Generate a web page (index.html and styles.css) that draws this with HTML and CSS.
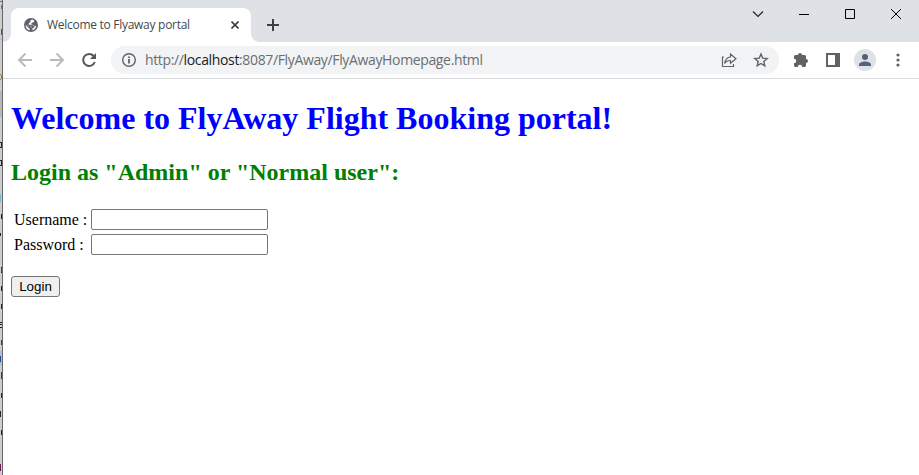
FILE: index.html
```html
<!DOCTYPE html>
<html lang="en">
<head>
<meta charset="utf-8">
<title>Welcome to Flyaway portal</title>
<link rel="stylesheet" href="styles.css">
</head>
<body>
<div class="desktop">
  <svg class="behind" width="3" height="475" viewBox="0 0 3 475" shape-rendering="crispEdges">
    <path fill="#cdcdcd" d="M0 0h2v475H0z"/>
    <path fill="#b9b9b9" d="M0 39h2v1H0zM0 91h2v26H0z"/>
    <path fill="#a8bfdd" d="M0 351h2v14H0z"/>
    <path fill="#777" d="M0 1h2v1H0zM1 5h1v4H1z"/>
    <path fill="#6b5a40" d="M1 29h1v6H1z"/>
    <path fill="#b57a22" d="M0 74h1v1H0zM1 75h1v4H1zM0 79h1v1H0z"/>
    <path fill="#222" d="M0 142h2v1H0zM1 143h1v4H1zM0 147h2v1H0zM0 160h2v1H0zM1 161h1v4H1zM0 165h2v1H0zM1 214h1v5H1zM0 233h1v3H0zM1 267h1v6H1zM1 286h1v5H1zM1 304h1v5H1zM0 322h2v1H0zM0 324h2v1H0zM0 327h2v1H0zM1 393h1v5H1zM0 411h1v6H0zM1 430h1v5H1z"/>
    <path fill="#7fb7d2" d="M0 194h1v8H0z"/>
    <path fill="#701850" d="M1 340h1v5H1zM1 372h1v7H1zM0 464h1v7H0z"/>
    <path fill="#264b9a" d="M0 356h1v6H0zM1 268h1v4H1z"/>
    <path fill="#686868" d="M2 0h1v475H2z"/>
  </svg>
  <div class="window">
    <header class="tabstrip">
      <div class="tab">
        <svg class="globe" width="14" height="14" viewBox="0 0 14 14"><circle cx="7" cy="7" r="7" fill="#5f6368"/><path fill="#fff" d="M8 1.500 6.400 2.600v1.500L4.800 5.200v1.500h3.600l1.200 1.200h2.600C11.800 10 10.500 11.600 8.500 12.200V11L7 9.700V8.400L5.500 8 1.700 5.900C1.200 8.900 2.900 11.700 5.700 12.300V10.700L4.200 9.500 1.600 7V5.800l3 2.100h2.700v2.200l1.600.5 1.700-1.900-1-1.500L7.500 6V5l2.400-1 .3-1.500z"/></svg>
        <span class="title">Welcome to Flyaway portal</span>
        <svg class="close" width="8" height="8" viewBox="0 0 8 8"><path d="m.5.5 7 7m0-7-7 7" stroke="#3c4043" stroke-width="1.600"/></svg>
      </div>
      <svg class="plus" width="12" height="12" viewBox="0 0 12 12"><path d="M6 0v12M0 6h12" stroke="#3c4043" stroke-width="2"/></svg>
      <div class="controls">
        <svg width="12" height="12" viewBox="0 0 12 12"><path d="m1 3.500 5 5 5-5" fill="none" stroke="#222" stroke-width="1.200"/></svg>
        <svg width="12" height="12" viewBox="0 0 12 12"><path d="M1 6.500h10" stroke="#000"/></svg>
        <svg width="12" height="12" viewBox="0 0 12 12"><path d="M1.500 1.500h9v9h-9z" fill="none" stroke="#000"/></svg>
        <svg width="12" height="12" viewBox="0 0 12 12"><path d="m1 1 10 10m0-10L1 11" stroke="#000"/></svg>
      </div>
    </header>
    <nav class="toolbar">
      <svg class="nav" width="16" height="16" viewBox="0 0 16 16"><path d="M15 8H2m6.500-6.500L2 8l6.500 6.500" fill="none" stroke="#bababc" stroke-width="1.900"/></svg>
      <svg class="nav" width="16" height="16" viewBox="0 0 16 16"><path d="M1 8h13M7.500 1.500 14 8l-6.500 6.500" fill="none" stroke="#bababc" stroke-width="1.900"/></svg>
      <svg class="nav" width="16" height="16" viewBox="0 0 16 16"><path d="M12.700 4A6 6 0 1 0 13.800 10" fill="none" stroke="#54585d" stroke-width="2"/><path fill="#54585d" d="M15 1v6H9z"/></svg>
      <div class="omnibox">
        <svg width="14" height="14" viewBox="0 0 14 14"><circle cx="7" cy="7" r="6.300" fill="none" stroke="#5f6368" stroke-width="1.400"/><path d="M7 6v4.500M7 3.400v1.500" stroke="#5f6368" stroke-width="1.800"/></svg>
        <span class="url">http://<b>localhost</b>:8087/FlyAway/FlyAwayHomepage.html</span>
        <svg class="share" width="16" height="16" viewBox="0 0 16 16"><path d="M3 5H1.500v9.500h11V12M9.500 5V2L15 6.700l-5.500 4.600V8.500C7 8.500 5 9.300 3.700 11.500 4.200 7.800 6 5.300 9.500 5z" fill="none" stroke="#5f6368" stroke-width="1.200"/></svg>
        <svg class="star" width="16" height="16" viewBox="0 0 16 16"><path d="m8 2 1.700 4.100 4.500.4-3.400 3 1 4.300L8 11.500l-3.800 2.300 1-4.300-3.400-3 4.500-.4z" fill="none" stroke="#5f6368" stroke-width="1.400"/></svg>
      </div>
      <svg class="puzzle" width="16" height="16" viewBox="0 0 16 16"><path fill="#5f6368" d="M1 4.500Q1 3 2.500 3H5a2 2 0 1 1 4 0h2.500Q13 3 13 4.500V7a2 2 0 1 1 0 4v2.500q0 1.500-1.500 1.500H9.200a2.200 2.200 0 0 0-4.400 0H2.500Q1 15 1 13.500v-2.300a2.200 2.200 0 0 0 0-4.400z"/></svg>
      <svg class="panel" width="14" height="14" viewBox="0 0 14 14"><path fill="#5f6368" fill-rule="evenodd" d="M0 0h14v14H0zM2 2v10h7V2z"/></svg>
      <div class="avatar"><svg width="12" height="12" viewBox="0 0 12 12"><circle cx="6" cy="3" r="3" fill="#53617b"/><path fill="#53617b" d="M0 12v-1.500C0 8.500 3.500 7.500 6 7.500s6 1 6 3V12z"/></svg></div>
      <svg class="more" width="4" height="14" viewBox="0 0 4 14"><g fill="#5f6368"><circle cx="2" cy="2" r="1.600"/><circle cx="2" cy="7" r="1.600"/><circle cx="2" cy="12" r="1.600"/></g></svg>
    </nav>
    <main class="page">
      <h1>Welcome to FlyAway Flight Booking portal!</h1>
      <h2>Login as "Admin" or "Normal user":</h2>
      <form>
        <table>
          <tr><td><label for="user">Username :</label></td><td><input id="user" type="text"></td></tr>
          <tr><td><label for="pass">Password :</label></td><td><input id="pass" type="password"></td></tr>
        </table>
        <button type="button">Login</button>
      </form>
    </main>
  </div>
</div>
</body>
</html>
```
FILE: styles.css
```css
* { box-sizing: border-box; }
body { margin: 0; background: #fff; }
svg { display: block; flex: none; }
.desktop { display: flex; height: 475px; overflow: hidden; }
.window { flex: 1; min-width: 0; }

.tabstrip { display: flex; height: 42px; padding: 8px 17px 0 8px; background: #dee1e6; }
.tab {
  position: relative;
  display: flex;
  align-items: center;
  width: 240px;
  height: 34px;
  padding: 0 12px 0 13px;
  background: #fff;
  border-radius: 8px 8px 0 0;
}
.tab::before, .tab::after { content: ""; position: absolute; bottom: 0; width: 8px; height: 8px; }
.tab::before { left: -8px; background: radial-gradient(circle at 0 0, transparent 7.5px, #fff 8px); }
.tab::after { right: -8px; background: radial-gradient(circle at 100% 0, transparent 7.5px, #fff 8px); }
.title { margin-left: 9px; font: 12px/16px "Open Sans", sans-serif; letter-spacing: -0.28px; color: #45494d; white-space: nowrap; }
.close { margin-left: auto; }
.plus { margin: 11px 0 0 16px; }
.controls { display: flex; gap: 34px; margin-left: auto; }

.toolbar { display: flex; align-items: center; height: 37px; padding-left: 14px; border-bottom: 1px solid #d9dadc; }
.nav { margin-right: 16px; }
.omnibox {
  display: flex;
  align-items: center;
  width: 668px;
  height: 28px;
  margin-left: -2px;
  padding: 0 10px 0 11px;
  border-radius: 14px;
  background: #f1f3f4;
}
.url { margin-left: 9px; font: 14px/20px "Open Sans", sans-serif; letter-spacing: -0.355px; color: #6a6e72; white-space: nowrap; }
.url b { font-weight: 400; color: #202124; }
.share { margin-left: auto; }
.star { margin-left: 16px; }
.puzzle { margin-left: 14px; }
.panel { margin-left: 17px; }
.avatar { display: grid; place-items: center; width: 22px; height: 22px; margin-left: 14px; border-radius: 50%; background: #dee1e6; }
.more { margin-left: 20px; }

.page { display: flow-root; padding: 0 8px; font: 16px "Liberation Serif", serif; color: #000; }
h1 { margin: 21px 0 22px; font-size: 32px; line-height: 37px; color: #00f; }
h2 { margin: 20px 0; font-size: 24px; line-height: 27px; color: green; }
form { margin: 0; }
table { border-spacing: 2px; margin-bottom: 18px; }
td { padding: 1px; }
input { display: block; width: 177px; height: 21px; padding: 1px 2px; border: 1px solid #767676; border-radius: 2px; background: #fff; }
button { display: block; width: 49px; height: 21px; padding: 0; border: 1px solid #767676; border-radius: 3px; background: #efefef; font: 13.333px/17px "Liberation Sans", sans-serif; color: #000; }
```
